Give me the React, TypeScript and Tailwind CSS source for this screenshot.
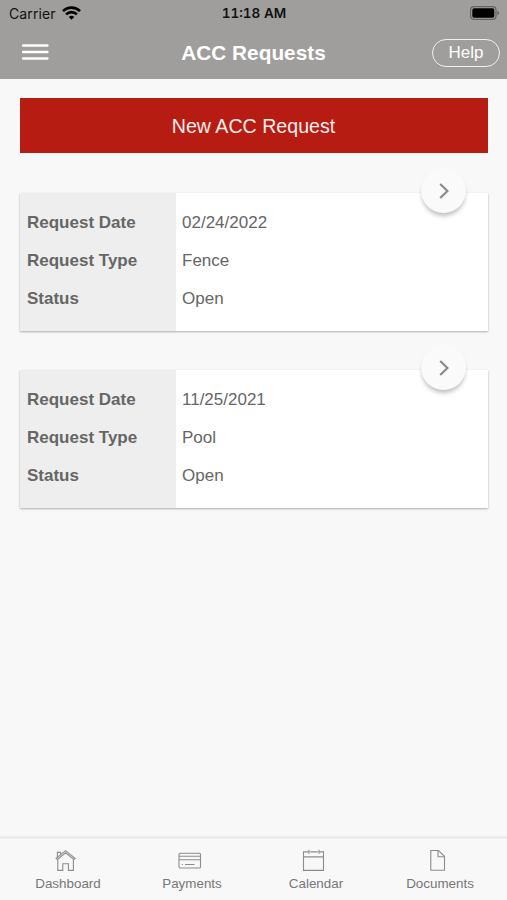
import type { ReactNode } from "react";

interface AccRequest {
  id: number;
  date: string;
  type: string;
  status: string;
}

const requests: AccRequest[] = [
  { id: 1, date: "02/24/2022", type: "Fence", status: "Open" },
  { id: 2, date: "11/25/2021", type: "Pool", status: "Open" },
];

const StatusBar = () => (
  <div className="grid h-[27px] grid-cols-3 items-center pl-[9px] pr-[7px] font-['Inter',sans-serif] text-[14px] text-[#111]">
    <div className="flex items-center gap-[6px]">
      <span className="tracking-[0.1px]">Carrier</span>
      <svg className="-mt-[2px]" width="19" height="14" viewBox="0 0 19 14" fill="none" stroke="#000" strokeWidth="2.7">
        <path d="M1 5.1a12.1 12.1 0 0 1 17 0" />
        <path d="M4.1 8.4a7.7 7.7 0 0 1 10.8 0" />
        <path d="M9.5 13.8 6.7 11a4 4 0 0 1 5.6 0Z" fill="#000" stroke="none" />
      </svg>
    </div>
    <span className="whitespace-nowrap pr-px text-center text-[13.5px] font-semibold tabular-nums">11:18 AM</span>
    <svg className="-mt-px justify-self-end" width="30" height="14" viewBox="0 0 30 14">
      <rect x="0.6" y="0.6" width="25.4" height="12.8" rx="3.4" fill="none" stroke="#646463" strokeWidth="1.2" />
      <rect x="2.3" y="2.3" width="22" height="9.4" rx="1.8" fill="#000" />
      <path d="M27.3 4.8c2.4.7 2.4 3.7 0 4.4Z" fill="#646463" />
    </svg>
  </div>
);

const Header = () => (
  <header className="h-[79px] shrink-0 bg-[#9f9e9c]">
    <StatusBar />
    <div className="grid h-[51px] grid-cols-[1fr_auto_1fr] items-center pl-[22px] pr-[7px] text-white">
      <svg className="-mt-[2px]" width="27" height="18" viewBox="0 0 27 18" stroke="#fff" strokeWidth="2.3" strokeLinecap="round">
        <path d="M1 2.5h24.5M1 9h24.5M1 15.5h24.5" />
      </svg>
      <h1 className="pr-[15px] text-[20.8px] font-bold">ACC Requests</h1>
      <button className="h-[28px] w-[68px] justify-self-end rounded-full border-[1.5px] border-[#f0f0f0] text-[17px] leading-[26px]">
        Help
      </button>
    </div>
  </header>
);

const RequestCard = ({ request }: { request: AccRequest }) => {
  const rows = [
    { label: "Request Date", value: request.date },
    { label: "Request Type", value: request.type },
    { label: "Status", value: request.status },
  ];

  return (
    <div className="relative h-[138px] bg-[linear-gradient(to_right,#eeeeee_156px,#ffffff_156px)] pt-[11px] text-[17px] leading-[38px] text-[#666] shadow-[0_1px_2px_rgba(0,0,0,0.3)]">
      {rows.map((row) => (
        <div key={row.label} className="grid grid-cols-[156px_1fr]">
          <span className="pl-[7px] font-bold">{row.label}</span>
          <span className="pl-[6px]">{row.value}</span>
        </div>
      ))}
      <button
        className="absolute -top-[25px] right-[22px] flex size-[45px] items-center justify-center rounded-full bg-[#fafafa] shadow-[0_4px_4px_-1px_rgba(0,0,0,0.25)]"
        aria-label="Open request"
      >
        <svg width="10" height="16" viewBox="0 0 10 16" fill="none" stroke="#8b8b8b" strokeWidth="2.2">
          <path d="m1.2 1 7.2 7-7.2 7" />
        </svg>
      </button>
    </div>
  );
};

const TabIcon = ({ children }: { children: ReactNode }) => (
  <svg width="24" height="24" viewBox="0 0 24 24" fill="none" stroke="#8c8c8c" strokeWidth="1.1">
    {children}
  </svg>
);

const tabs = [
  {
    label: "Dashboard",
    icon: (
      <>
        <path d="M3.3 10.5 2.1 9.2 11.6 1.6 21.1 9.2l-1.2 1.3-8.3-6.7Z" />
        <path d="M3.8 10.2v11.2h5v-6.7h5.6v6.7h5V10.2M3.4 8.1V3.4h3.2v2" />
      </>
    ),
  },
  {
    label: "Payments",
    icon: (
      <>
        <rect x="1" y="4.2" width="21.5" height="14.8" rx="1" />
        <path d="M1 7.3h21.5M1 10.8h21.5M3.8 15.5h1.1M7 15.5h9.5" />
      </>
    ),
  },
  {
    label: "Calendar",
    icon: (
      <>
        <path d="M6.5 2.9h-5v18.5h20V2.9h-4M8.2 2.9h7.6M1.5 7.9h20M7 .8v4M17 .8v4" />
      </>
    ),
  },
  {
    label: "Documents",
    icon: (
      <>
        <path d="M4.8 1.5h7.7l6 5.8v14H4.8Z" />
        <path d="M12 1.5v6.2h6.5" />
      </>
    ),
  },
];

const TabBar = () => (
  <nav className="grid h-[64px] shrink-0 grid-cols-4 border-t-[3px] border-[#ececec] pl-[6px] pr-[5px] text-[13.4px] text-[#777]">
    {tabs.map((tab) => (
      <button key={tab.label} className="flex flex-col items-center pt-[10px]">
        <span className="mr-[4px]">
          <TabIcon>{tab.icon}</TabIcon>
        </span>
        <span className="mt-[1px] leading-[20px]">{tab.label}</span>
      </button>
    ))}
  </nav>
);

const App = () => {
  return (
    <div className="flex h-screen flex-col bg-[#f8f8f8] font-['Liberation_Sans',Arial,sans-serif]">
      <Header />
      <main className="flex-1 pl-[20px] pr-[19px] pt-[19px]">
        <button className="h-[55px] w-full bg-[#b71c12] pr-px pt-[2px] text-[19.6px] text-[#fbeeee]">
          New ACC Request
        </button>
        <div className="mt-[40px] flex flex-col gap-[39px]">
          {requests.map((request) => (
            <RequestCard key={request.id} request={request} />
          ))}
        </div>
      </main>
      <TabBar />
    </div>
  );
};

export default App;
